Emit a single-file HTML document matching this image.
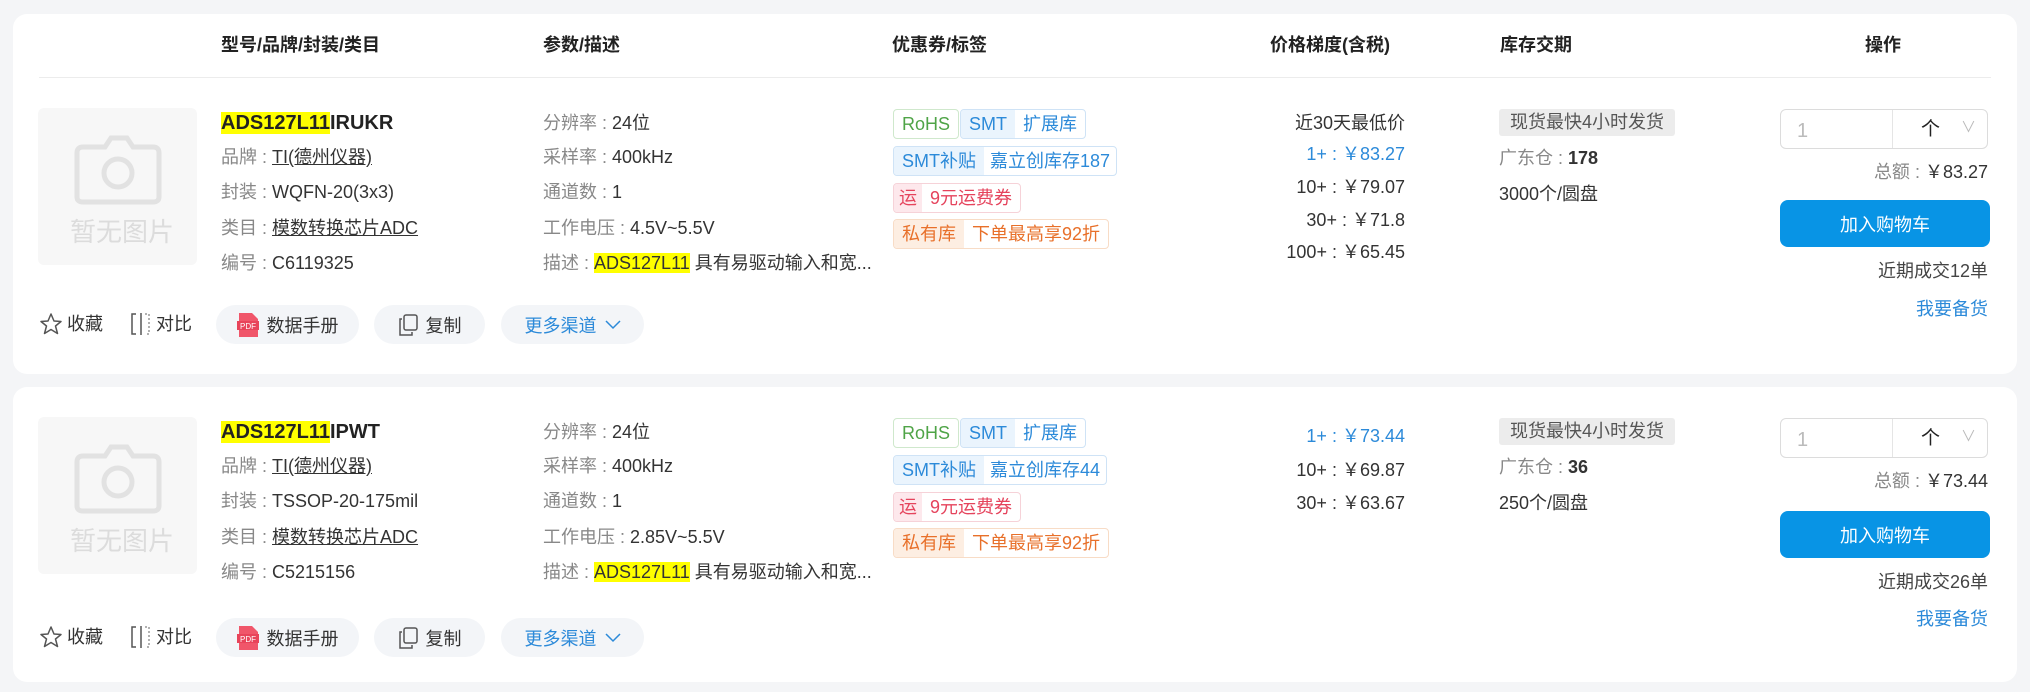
<!DOCTYPE html>
<html><head><meta charset="utf-8"><style>
*{margin:0;padding:0;box-sizing:border-box}
body{width:2030px;height:692px;background:#f4f5f7;font-family:"Liberation Sans","Noto Sans CJK SC",sans-serif;color:#333;position:relative;overflow:hidden;font-size:18px}
.card{position:absolute;left:13px;width:2004px;background:#fff;border-radius:14px}
.a{position:absolute;white-space:nowrap;line-height:1}
.h{font-weight:bold;font-size:18px;color:#222}
.lab{color:#888}
.u{text-decoration:underline}
.hl{background:#ffff00}
.tag{position:absolute;height:30px;border:1px solid #ddd;border-radius:4px;display:flex;overflow:hidden;font-size:18px;line-height:28px;white-space:nowrap}
.tag span{padding:0 8px}
.pill{position:absolute;height:39px;border-radius:20px;background:#f3f5f8;display:flex;align-items:center;justify-content:center;font-size:18px;gap:8px}
.btn{position:absolute;left:1780px;width:210px;height:47px;background:#0894e5;border-radius:8px;color:#fff;font-size:18px;display:flex;align-items:center;justify-content:center}
.qty{position:absolute;left:1780px;width:208px;height:40px;border:1px solid #dcdcdc;border-radius:6px}
</style></head><body>

<div class="card" style="top:14px;height:360px"></div>
<div class="card" style="top:387px;height:295px"></div>

<div class="a h" style="left:221px;top:36px">型号/品牌/封装/类目</div>
<div class="a h" style="left:543px;top:36px">参数/描述</div>
<div class="a h" style="left:892px;top:36px">优惠券/标签</div>
<div class="a h" style="left:1270px;top:36px">价格梯度(含税)</div>
<div class="a h" style="left:1500px;top:36px">库存交期</div>
<div class="a h" style="left:1865px;top:36px">操作</div>
<div class="a" style="left:39px;top:77px;width:1952px;height:1px;background:#ececec"></div>

<!-- Row 1 -->
<div style="position:absolute;left:0;top:109px;width:2030px">
  <div class="a" style="left:38px;top:-1px;width:159px;height:157px;background:#f7f7f7;border-radius:6px"></div>
  <svg class="a" style="left:73px;top:26px" width="90" height="72" viewBox="0 0 90 72"><path d="M32 12 L38 3 H54 L60 12 H80 Q86 12 86 18 V62 Q86 67 80 67 H10 Q4 67 4 62 V18 Q4 12 10 12 Z" fill="none" stroke="#e2e2e2" stroke-width="5"/><circle cx="45" cy="38" r="14" fill="none" stroke="#e2e2e2" stroke-width="5"/></svg>
  <div class="a" style="left:70px;top:110px;font-size:26px;color:#dcdcdc">暂无图片</div>

  <div class="a" style="left:221px;top:4px;font-size:20px;font-weight:bold;color:#222"><span class="hl">ADS127L11</span>IRUKR</div>
  <div class="a" style="left:221px;top:39px"><span class="lab">品牌 : </span><span class="u">TI(德州仪器)</span></div>
  <div class="a" style="left:221px;top:74px"><span class="lab">封装 : </span>WQFN-20(3x3)</div>
  <div class="a" style="left:221px;top:110px"><span class="lab">类目 : </span><span class="u">模数转换芯片ADC</span></div>
  <div class="a" style="left:221px;top:145px"><span class="lab">编号 : </span>C6119325</div>

  <div class="a" style="left:543px;top:5px"><span class="lab">分辨率 : </span>24位</div>
  <div class="a" style="left:543px;top:39px"><span class="lab">采样率 : </span>400kHz</div>
  <div class="a" style="left:543px;top:74px"><span class="lab">通道数 : </span>1</div>
  <div class="a" style="left:543px;top:110px"><span class="lab">工作电压 : </span>4.5V~5.5V</div>
  <div class="a" style="left:543px;top:145px"><span class="lab">描述 : </span><span class="hl">ADS127L11</span> 具有易驱动输入和宽...</div>

  <div class="tag" style="left:893px;top:0;border-color:#cfe8cc;color:#4fa447"><span>RoHS</span></div>
  <div class="tag" style="left:960px;top:0;border-color:#cfe3f6;color:#2c8ad9"><span style="background:#eaf4fd">SMT</span><span>扩展库</span></div>
  <div class="tag" style="left:893px;top:37px;border-color:#cfe3f6;color:#2c8ad9"><span style="background:#eaf4fd">SMT补贴</span><span style="padding:0 6px">嘉立创库存187</span></div>
  <div class="tag" style="left:893px;top:74px;border-color:#f6d2d8;color:#e5435c"><span style="background:#fde8ec;padding:0 5px">运</span><span>9元运费券</span></div>
  <div class="tag" style="left:893px;top:110px;border-color:#f8dcc6;color:#e8702a"><span style="background:#fdeee2">私有库</span><span>下单最高享92折</span></div>

  <div class="a" style="right:625px;top:5px">近30天最低价</div>
  <div class="a" style="right:625px;top:36px;color:#2c8ad9">1+ : ￥83.27</div>
  <div class="a" style="right:625px;top:69px">10+ : ￥79.07</div>
  <div class="a" style="right:625px;top:102px">30+ : ￥71.8</div>
  <div class="a" style="right:625px;top:134px">100+ : ￥65.45</div>

  <div class="a" style="left:1499px;top:0;width:176px;height:27px;background:#ececec;border-radius:3px;color:#555;line-height:27px;text-align:center">现货最快4小时发货</div>
  <div class="a" style="left:1499px;top:40px"><span class="lab">广东仓 : </span><b>178</b></div>
  <div class="a" style="left:1499px;top:76px">3000个/圆盘</div>

  <div class="qty" style="top:0"><div class="a" style="left:16px;top:11px;color:#bbb;font-size:20px">1</div><div class="a" style="left:111px;top:0;width:1px;height:38px;background:#e5e5e5"></div><div class="a" style="left:140px;top:10px;font-size:19px;color:#222">个</div><div class="a" style="left:180px;top:10px;color:#bbb;font-size:15px">∨</div></div>
  <div class="a" style="right:42px;top:54px"><span class="lab">总额 : </span>￥83.27</div>
  <div class="btn" style="top:91px">加入购物车</div>
  <div class="a" style="right:42px;top:153px;color:#444">近期成交12单</div>
  <div class="a" style="right:42px;top:191px;color:#2c8ad9">我要备货</div>

  <svg class="a" style="left:39px;top:203px" width="24" height="24" viewBox="0 0 24 24"><path d="M12 2 L15 9 L22 9.5 L16.5 14 L18.5 21.5 L12 17.5 L5.5 21.5 L7.5 14 L2 9.5 L9 9 Z" fill="none" stroke="#555" stroke-width="1.5" stroke-linejoin="round"/></svg>
  <div class="a" style="left:67px;top:206px">收藏</div>
  <svg class="a" style="left:129px;top:203px" width="24" height="24" viewBox="0 0 24 24"><path d="M7 2 H3 V22 H7" fill="none" stroke="#555" stroke-width="1.5"/><path d="M12 1 V23" stroke="#555" stroke-width="1.5"/><path d="M16 2 H20 V22 H16" fill="none" stroke="#999" stroke-width="1.5" stroke-dasharray="2 2"/></svg>
  <div class="a" style="left:156px;top:206px">对比</div>
  <div class="pill" style="left:216px;top:196px;width:143px"><svg width="22" height="26" viewBox="0 0 22 26"><path d="M2 1 H15 L21 7 V25 H2 Z" fill="#f0566a"/><rect x="0" y="9" width="22" height="9" fill="#e8445a"/><text x="11" y="17" font-size="8" fill="#fff" text-anchor="middle" font-family="Liberation Sans">PDF</text></svg>数据手册</div>
  <div class="pill" style="left:374px;top:196px;width:111px"><svg width="20" height="22" viewBox="0 0 20 22"><rect x="6" y="1" width="13" height="15" rx="2" fill="none" stroke="#555" stroke-width="1.5"/><path d="M4 5 H2 V21 H14 V18" fill="none" stroke="#555" stroke-width="1.5"/></svg>复制</div>
  <div class="pill" style="left:501px;top:196px;width:143px;color:#2c8ad9">更多渠道 <svg width="16" height="10" viewBox="0 0 16 10"><path d="M1 1 L8 8 L15 1" fill="none" stroke="#2c8ad9" stroke-width="1.5"/></svg></div>
</div>

<!-- Row 2 -->
<div style="position:absolute;left:0;top:418px;width:2030px">
  <div class="a" style="left:38px;top:-1px;width:159px;height:157px;background:#f7f7f7;border-radius:6px"></div>
  <svg class="a" style="left:73px;top:26px" width="90" height="72" viewBox="0 0 90 72"><path d="M32 12 L38 3 H54 L60 12 H80 Q86 12 86 18 V62 Q86 67 80 67 H10 Q4 67 4 62 V18 Q4 12 10 12 Z" fill="none" stroke="#e2e2e2" stroke-width="5"/><circle cx="45" cy="38" r="14" fill="none" stroke="#e2e2e2" stroke-width="5"/></svg>
  <div class="a" style="left:70px;top:110px;font-size:26px;color:#dcdcdc">暂无图片</div>

  <div class="a" style="left:221px;top:4px;font-size:20px;font-weight:bold;color:#222"><span class="hl">ADS127L11</span>IPWT</div>
  <div class="a" style="left:221px;top:39px"><span class="lab">品牌 : </span><span class="u">TI(德州仪器)</span></div>
  <div class="a" style="left:221px;top:74px"><span class="lab">封装 : </span>TSSOP-20-175mil</div>
  <div class="a" style="left:221px;top:110px"><span class="lab">类目 : </span><span class="u">模数转换芯片ADC</span></div>
  <div class="a" style="left:221px;top:145px"><span class="lab">编号 : </span>C5215156</div>

  <div class="a" style="left:543px;top:5px"><span class="lab">分辨率 : </span>24位</div>
  <div class="a" style="left:543px;top:39px"><span class="lab">采样率 : </span>400kHz</div>
  <div class="a" style="left:543px;top:74px"><span class="lab">通道数 : </span>1</div>
  <div class="a" style="left:543px;top:110px"><span class="lab">工作电压 : </span>2.85V~5.5V</div>
  <div class="a" style="left:543px;top:145px"><span class="lab">描述 : </span><span class="hl">ADS127L11</span> 具有易驱动输入和宽...</div>

  <div class="tag" style="left:893px;top:0;border-color:#cfe8cc;color:#4fa447"><span>RoHS</span></div>
  <div class="tag" style="left:960px;top:0;border-color:#cfe3f6;color:#2c8ad9"><span style="background:#eaf4fd">SMT</span><span>扩展库</span></div>
  <div class="tag" style="left:893px;top:37px;border-color:#cfe3f6;color:#2c8ad9"><span style="background:#eaf4fd">SMT补贴</span><span style="padding:0 6px">嘉立创库存44</span></div>
  <div class="tag" style="left:893px;top:74px;border-color:#f6d2d8;color:#e5435c"><span style="background:#fde8ec;padding:0 5px">运</span><span>9元运费券</span></div>
  <div class="tag" style="left:893px;top:110px;border-color:#f8dcc6;color:#e8702a"><span style="background:#fdeee2">私有库</span><span>下单最高享92折</span></div>

  <div class="a" style="right:625px;top:9px;color:#2c8ad9">1+ : ￥73.44</div>
  <div class="a" style="right:625px;top:43px">10+ : ￥69.87</div>
  <div class="a" style="right:625px;top:76px">30+ : ￥63.67</div>

  <div class="a" style="left:1499px;top:0;width:176px;height:27px;background:#ececec;border-radius:3px;color:#555;line-height:27px;text-align:center">现货最快4小时发货</div>
  <div class="a" style="left:1499px;top:40px"><span class="lab">广东仓 : </span><b>36</b></div>
  <div class="a" style="left:1499px;top:76px">250个/圆盘</div>

  <div class="qty" style="top:0"><div class="a" style="left:16px;top:11px;color:#bbb;font-size:20px">1</div><div class="a" style="left:111px;top:0;width:1px;height:38px;background:#e5e5e5"></div><div class="a" style="left:140px;top:10px;font-size:19px;color:#222">个</div><div class="a" style="left:180px;top:10px;color:#bbb;font-size:15px">∨</div></div>
  <div class="a" style="right:42px;top:54px"><span class="lab">总额 : </span>￥73.44</div>
  <div class="btn" style="top:93px">加入购物车</div>
  <div class="a" style="right:42px;top:155px;color:#444">近期成交26单</div>
  <div class="a" style="right:42px;top:192px;color:#2c8ad9">我要备货</div>

  <svg class="a" style="left:39px;top:207px" width="24" height="24" viewBox="0 0 24 24"><path d="M12 2 L15 9 L22 9.5 L16.5 14 L18.5 21.5 L12 17.5 L5.5 21.5 L7.5 14 L2 9.5 L9 9 Z" fill="none" stroke="#555" stroke-width="1.5" stroke-linejoin="round"/></svg>
  <div class="a" style="left:67px;top:210px">收藏</div>
  <svg class="a" style="left:129px;top:207px" width="24" height="24" viewBox="0 0 24 24"><path d="M7 2 H3 V22 H7" fill="none" stroke="#555" stroke-width="1.5"/><path d="M12 1 V23" stroke="#555" stroke-width="1.5"/><path d="M16 2 H20 V22 H16" fill="none" stroke="#999" stroke-width="1.5" stroke-dasharray="2 2"/></svg>
  <div class="a" style="left:156px;top:210px">对比</div>
  <div class="pill" style="left:216px;top:200px;width:143px"><svg width="22" height="26" viewBox="0 0 22 26"><path d="M2 1 H15 L21 7 V25 H2 Z" fill="#f0566a"/><rect x="0" y="9" width="22" height="9" fill="#e8445a"/><text x="11" y="17" font-size="8" fill="#fff" text-anchor="middle" font-family="Liberation Sans">PDF</text></svg>数据手册</div>
  <div class="pill" style="left:374px;top:200px;width:111px"><svg width="20" height="22" viewBox="0 0 20 22"><rect x="6" y="1" width="13" height="15" rx="2" fill="none" stroke="#555" stroke-width="1.5"/><path d="M4 5 H2 V21 H14 V18" fill="none" stroke="#555" stroke-width="1.5"/></svg>复制</div>
  <div class="pill" style="left:501px;top:200px;width:143px;color:#2c8ad9">更多渠道 <svg width="16" height="10" viewBox="0 0 16 10"><path d="M1 1 L8 8 L15 1" fill="none" stroke="#2c8ad9" stroke-width="1.5"/></svg></div>
</div>
</body></html>
